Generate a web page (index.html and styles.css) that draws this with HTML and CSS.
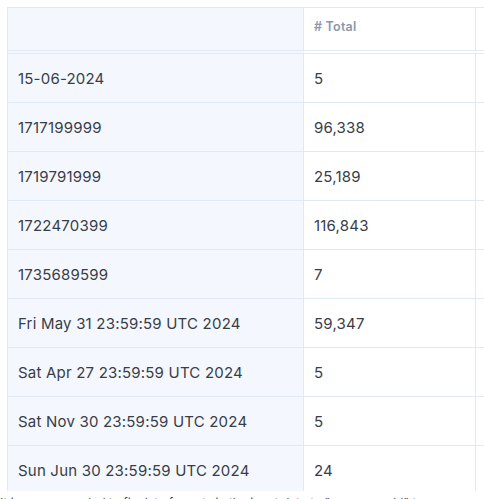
FILE: index.html
```html
<!DOCTYPE html>
<html>
<head>
<meta charset="utf-8">
<link rel="stylesheet" href="styles.css">
</head>
<body>
<div class="page">
  <div class="scroller">
    <table class="grid">
      <colgroup>
        <col class="c1"><col class="c2"><col class="c3">
      </colgroup>
      <thead>
        <tr>
          <th class="key"></th>
          <th>#&nbsp;Total</th>
          <th></th>
        </tr>
      </thead>
      <tbody>
        <tr><td class="key">15-06-2024</td><td>5</td><td></td></tr>
        <tr><td class="key">1717199999</td><td>96,338</td><td></td></tr>
        <tr><td class="key">1719791999</td><td>25,189</td><td></td></tr>
        <tr><td class="key">1722470399</td><td>116,843</td><td></td></tr>
        <tr><td class="key">1735689599</td><td>7</td><td></td></tr>
        <tr><td class="key">Fri May 31 23:59:59 UTC 2024</td><td>59,347</td><td></td></tr>
        <tr><td class="key">Sat Apr 27 23:59:59 UTC 2024</td><td>5</td><td></td></tr>
        <tr><td class="key">Sat Nov 30 23:59:59 UTC 2024</td><td>5</td><td></td></tr>
        <tr><td class="key">Sun Jun 30 23:59:59 UTC 2024</td><td>24</td><td></td></tr>
        <tr><td class="key">Thu Oct 31 23:59:59 UTC 2024</td><td>3</td><td></td></tr>
      </tbody>
    </table>
  </div>
</div>
<p class="note">It is recommended to fix date formats in the input data to "yyyy-mm-dd" to ensure consistent grouping.</p>
</body>
</html>
```

FILE: styles.css
```css
html, body {
  margin: 0;
  padding: 0;
  background: #ffffff;
  font-family: "Inter", "Noto Sans", sans-serif;
  overflow: hidden;
}

.page {
  padding: 7px 0 0 7px;
  width: 700px;
}

.scroller {
  height: 484px;
  overflow: hidden;
}

.grid {
  border-collapse: separate;
  border-spacing: 0;
  table-layout: fixed;
  width: 641px;
  border-left: 1px solid #e2e9f6;
  border-top: 1px solid #e2e9f6;
}

.c1 { width: 296px; }
.c2 { width: 172px; }
.c3 { width: 172px; }

.grid th,
.grid td {
  border-right: 1px solid #e2e9f6;
  border-bottom: 1px solid #e2e9f6;
  padding: 0 10px;
  text-align: left;
  white-space: nowrap;
  background: #ffffff;
}

.grid th {
  height: 37px;
  padding-bottom: 6px;
  border-bottom: 2px solid transparent;
  box-shadow: inset 0 -1px 0 #e2e9f6;
  font-size: 12.5px;
  font-weight: 600;
  letter-spacing: 0.2px;
  color: #8c97ad;
}

.grid tbody tr:first-child td {
  border-top: 1px solid #e2e9f6;
}

.grid td {
  height: 48px;
  font-size: 15px;
  letter-spacing: 0.2px;
  color: #383d47;
}

.grid .key {
  background: #f4f7fe;
}

.note {
  margin: 4px 0 0 0;
  width: 484px;
  font-size: 12px;
  line-height: 16px;
  color: #444a55;
  white-space: nowrap;
  overflow: hidden;
}
```
